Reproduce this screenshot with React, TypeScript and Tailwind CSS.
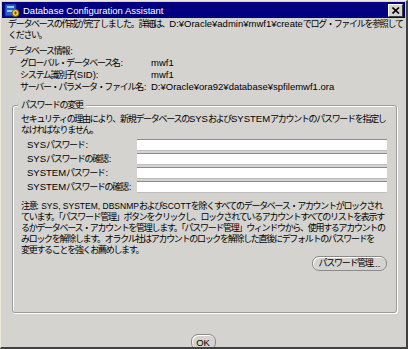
import React from "react";

const FONT = {
  fontFamily: '"Liberation Sans", "Noto Sans CJK JP", sans-serif',
};

function L({ children, small }: { children: React.ReactNode; small?: boolean }) {
  return <span className={small ? "text-[8.5px] tracking-normal" : "text-[9.5px] tracking-normal"}>{children}</span>;
}

function C() {
  return <span className="text-[9.5px] tracking-normal pl-[1px]">:</span>;
}

function AppIcon() {
  return (
    <svg width="16" height="16" viewBox="0 0 16 16">
      <rect x="1" y="2" width="11" height="12" fill="#2a5bd7" stroke="#0b2a80" />
      <rect x="3" y="4" width="7" height="2" fill="#9ec3ff" />
      <rect x="3" y="8" width="7" height="2" fill="#9ec3ff" />
      <circle cx="11.5" cy="11" r="3.5" fill="#f3c640" stroke="#7a5a00" />
      <path d="M10 11h3M11.5 9.5v3" stroke="#7a5a00" />
    </svg>
  );
}

function CloseBtn() {
  return (
    <div className="w-[15px] h-[13px] bg-[#d4d3cf] border-t border-l border-white border-r border-b border-r-[#404040] border-b-[#404040] flex items-center justify-center">
      <svg width="8" height="7" viewBox="0 0 8 7">
        <path d="M0.5 0.5L7 6.5M7 0.5L0.5 6.5" stroke="#000" strokeWidth="1.6" />
      </svg>
    </div>
  );
}

function Field({ children }: { children: React.ReactNode }) {
  return (
    <div className="flex items-center h-[14px]">
      <div className="w-[116px] pl-[6px] whitespace-nowrap">{children}</div>
      <div className="w-[250px] h-[12px] bg-white border-t border-[#8c8c8c] border-b border-b-[#bdbdbd]" />
    </div>
  );
}

function RoundBtn({ children, className }: { children: React.ReactNode; className?: string }) {
  return (
    <div
      className={
        "rounded-[7px] border border-[#8a8a8a] bg-[#d4d3cf] shadow-[inset_1px_1px_0_#ffffff] flex items-center justify-center whitespace-nowrap " +
        (className ?? "")
      }
    >
      {children}
    </div>
  );
}

export default function App() {
  return (
    <div
      className="w-[408px] h-[349px] bg-[#d4d3cf] flex flex-col border-l border-t border-[#ece9d8] border-r-2 border-b-2 border-r-[#404040] border-b-[#404040] text-[9px] tracking-[-1.3px] leading-[11px] text-black overflow-hidden"
      style={FONT}
    >
      <div className="h-[18px] mx-[1px] mt-[1px] bg-[#000080] flex items-center pl-[2px] pr-[2px] tracking-normal">
        <AppIcon />
        <div className="ml-[3px] text-white text-[9.5px] flex-1 whitespace-nowrap">Database Configuration Assistant</div>
        <CloseBtn />
      </div>

      <div className="flex flex-col flex-1 pl-[7px] pr-[8px]">
        <div className="whitespace-nowrap">
          データベースの作成が完了しました。詳細は、<L>D:¥Oracle¥admin¥mwf1¥create</L>でログ・ファイルを参照して
        </div>
        <div className="whitespace-nowrap">ください。</div>

        <div className="mt-[4px] whitespace-nowrap">データベース情報<C /></div>
        <div className="grid grid-cols-[131px_1fr] pl-[12px]">
          <div className="whitespace-nowrap">グローバル・データベース名<C /></div>
          <div><L>mwf1</L></div>
          <div className="whitespace-nowrap"><span>システム識別子</span><L>(SID):</L></div>
          <div><L>mwf1</L></div>
          <div className="whitespace-nowrap">サーバー・パラメータ・ファイル名<C /></div>
          <div className="whitespace-nowrap"><L>D:¥Oracle¥ora92¥database¥spfilemwf1.ora</L></div>
        </div>

        <div className="relative mt-[12px] ml-[4px] mr-[1px] h-[208px] border border-[#9c9c9c] rounded-[3px] shadow-[1px_1px_0_#ffffff,inset_1px_1px_0_#ffffff]">
          <div className="absolute -top-[6px] left-[5px] px-[3px] bg-[#d4d3cf] whitespace-nowrap">パスワードの変更</div>
          <div className="flex flex-col pl-[8px] pt-[7px]">
            <div className="whitespace-nowrap">
              セキュリティの理由により、新規データベースの<L>SYS</L>および<L>SYSTEM</L>アカウントのパスワードを指定し
            </div>
            <div className="whitespace-nowrap">なければなりません。</div>
            <div className="mt-[2px] flex flex-col">
              <Field><L>SYS</L>パスワード<C /></Field>
              <Field><L>SYS</L>パスワードの確認<C /></Field>
              <Field><L>SYSTEM</L>パスワード<C /></Field>
              <Field><L>SYSTEM</L>パスワードの確認<C /></Field>
            </div>
            <div className="mt-[7px] flex flex-col">
              <div className="whitespace-nowrap">
                注意<L small>: SYS, SYSTEM, DBSNMP</L>および<L small>SCOTT</L>を除くすべてのデータベース・アカウントがロックされ
              </div>
              <div className="whitespace-nowrap">ています。「パスワード管理」ボタンをクリックし、ロックされているアカウントすべてのリストを表示す</div>
              <div className="whitespace-nowrap">るかデータベース・アカウントを管理します。「パスワード管理」ウィンドウから、使用するアカウントの</div>
              <div className="whitespace-nowrap">みロックを解除します。オラクル社はアカウントのロックを解除した直後にデフォルトのパスワードを</div>
              <div className="whitespace-nowrap">変更することを強くお薦めします。</div>
            </div>
            <div className="flex justify-end pr-[9px]">
              <RoundBtn className="w-[75px] h-[15px]">パスワード管理<L>...</L></RoundBtn>
            </div>
          </div>
        </div>

        <div className="flex justify-center mt-[21px]">
          <RoundBtn className="w-[25px] h-[16px]"><L>OK</L></RoundBtn>
        </div>
      </div>
    </div>
  );
}
